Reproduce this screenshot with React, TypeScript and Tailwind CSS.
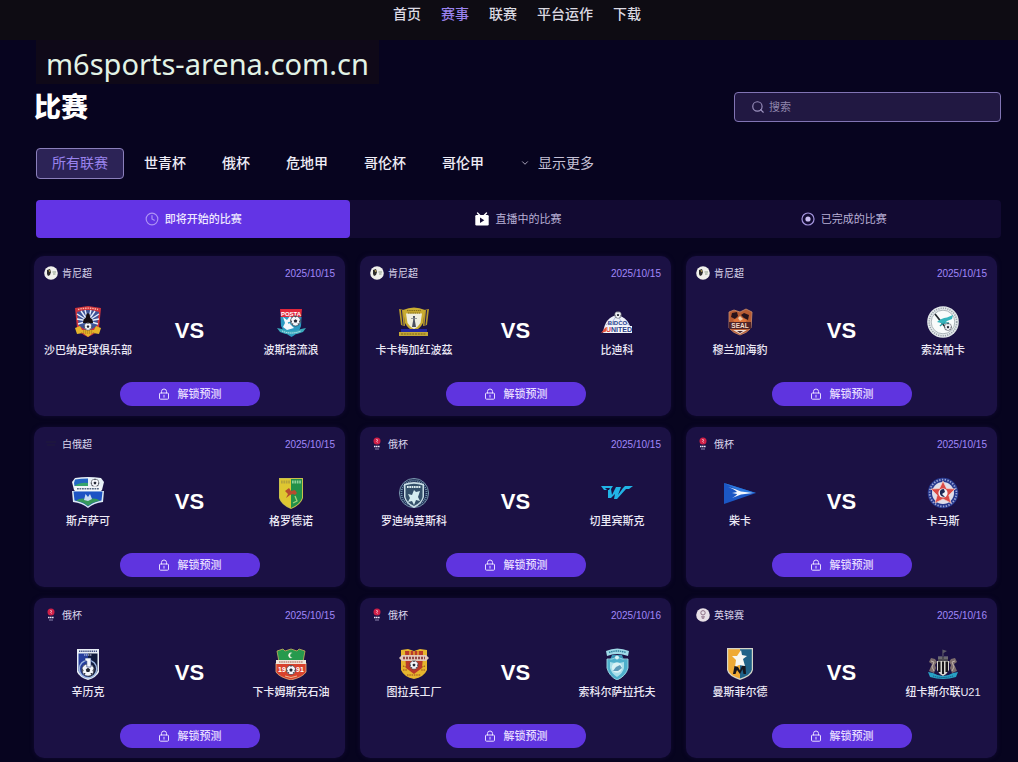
import React from "react";
import { ChevronDown, Clock, Search } from "lucide-react";

type CrestName =
  | "shabana"
  | "posta"
  | "kakamega"
  | "bidco"
  | "seal"
  | "sofapaka"
  | "slutsk"
  | "neman"
  | "rodina"
  | "wing"
  | "chayka"
  | "kamaz"
  | "shinnik"
  | "neftekhimik"
  | "arsenal"
  | "sokol"
  | "mansfield"
  | "newcastle";

type LeagueIconName = "kenya" | "belarus" | "russia" | "england";

interface Team {
  name: string;
  crest: CrestName;
}

interface Match {
  league: string;
  leagueIcon: LeagueIconName;
  date: string;
  home: Team;
  away: Team;
}

const navItems = ["首页", "赛事", "联赛", "平台运作", "下载"];

const leagues = ["世青杯", "俄杯", "危地甲", "哥伦杯", "哥伦甲"];

const matches: Match[] = [
  {
    league: "肯尼超",
    leagueIcon: "kenya",
    date: "2025/10/15",
    home: { name: "沙巴纳足球俱乐部", crest: "shabana" },
    away: { name: "波斯塔流浪", crest: "posta" },
  },
  {
    league: "肯尼超",
    leagueIcon: "kenya",
    date: "2025/10/15",
    home: { name: "卡卡梅加红波茲", crest: "kakamega" },
    away: { name: "比迪科", crest: "bidco" },
  },
  {
    league: "肯尼超",
    leagueIcon: "kenya",
    date: "2025/10/15",
    home: { name: "穆兰加海豹", crest: "seal" },
    away: { name: "索法帕卡", crest: "sofapaka" },
  },
  {
    league: "白俄超",
    leagueIcon: "belarus",
    date: "2025/10/15",
    home: { name: "斯卢萨可", crest: "slutsk" },
    away: { name: "格罗德诺", crest: "neman" },
  },
  {
    league: "俄杯",
    leagueIcon: "russia",
    date: "2025/10/15",
    home: { name: "罗迪纳莫斯科", crest: "rodina" },
    away: { name: "切里宾斯克", crest: "wing" },
  },
  {
    league: "俄杯",
    leagueIcon: "russia",
    date: "2025/10/15",
    home: { name: "柴卡", crest: "chayka" },
    away: { name: "卡马斯", crest: "kamaz" },
  },
  {
    league: "俄杯",
    leagueIcon: "russia",
    date: "2025/10/15",
    home: { name: "辛历克", crest: "shinnik" },
    away: { name: "下卡姆斯克石油", crest: "neftekhimik" },
  },
  {
    league: "俄杯",
    leagueIcon: "russia",
    date: "2025/10/16",
    home: { name: "图拉兵工厂", crest: "arsenal" },
    away: { name: "索科尔萨拉托夫", crest: "sokol" },
  },
  {
    league: "英锦赛",
    leagueIcon: "england",
    date: "2025/10/16",
    home: { name: "曼斯菲尔德", crest: "mansfield" },
    away: { name: "纽卡斯尔联U21", crest: "newcastle" },
  },
];

const Ball = ({ x, y, r }: { x: number; y: number; r: number }) => (
  <g transform={`translate(${x} ${y}) scale(${r / 5})`}>
    <circle r="5" fill="#f4f6fa" stroke="#222633" strokeWidth="0.6" />
    <path d="M0-1.8 1.8-.5 1.1 1.6H-1.1L-1.8-.5Z" fill="#222633" />
    <path
      d="M-1.5-4.7 0-3.5 1.5-4.7ZM4.8-1.2 3.6.2 4.3 2.2ZM-4.8-1.2-3.6.2-4.3 2.2ZM2.8 4 1.9 2.8 3.6 2.3ZM-2.8 4-1.9 2.8-3.6 2.3Z"
      fill="#222633"
    />
  </g>
);

const crests: Record<CrestName, React.ReactNode> = {
  shabana: (
    <>
      <path d="M3 2 16 0 29 2 27 22Q24 28 16 31 8 28 5 22Z" fill="#cf343c" />
      <path d="M5 6Q16 2 27 6L25 20Q16 27 7 20Z" fill="#3d5398" />
      <path
        d="M16 15 5 8M16 15 9 5M16 15 13 4M16 15 19 4M16 15 23 5M16 15 27 8M16 15 27 13M16 15 5 13M16 15 6 18M16 15 26 18"
        stroke="#e7eefb"
        strokeWidth="1.4"
      />
      <path d="M6 3.5Q16 .8 26 3.5" stroke="#ffb9a8" strokeWidth="1.4" strokeDasharray="1.4 1" fill="none" />
      <path d="M11 17Q11 13 13.5 12L14.5 9H17.5L18.5 12Q21 13 21 17Z" fill="#160d14" />
      <circle cx="16" cy="9" r="1.8" fill="#160d14" />
      <path d="M3 22 8 20 10 24H22L24 20 29 22 27 28 21 27 16 31 11 27 5 28Z" fill="#e5b52b" />
      <path d="M9 27H23M11 25H21" stroke="#916315" strokeWidth="0.8" strokeDasharray="1.2 0.8" />
      <Ball x={16} y={20.5} r={3.8} />
    </>
  ),
  posta: (
    <>
      <path d="M5 3H27L26 13H6Z" fill="#e2283c" />
      <path d="M5.5 11H26.5L26 20Q24 27 16.5 31 9 27 6 20Z" fill="#2c9ac2" />
      <text x="16" y="9.5" textAnchor="middle" fontSize="6" fontWeight="700" fill="#fff" fontFamily="Liberation Sans, sans-serif">
        POSTA
      </text>
      <path d="M8 11 12 14 15 10 17 13 15 18 19 22 12 24 8 21 10 17Z" fill="#f5f8fc" />
      <path d="M13 17 17 16 19 20" stroke="#34a5c7" strokeWidth="1.4" fill="none" />
      <Ball x={20.5} y={15} r={5} />
      <path d="M2 22 7 23Q16 27 26 23L31 22 28 26Q16 31 5 26Z" fill="#3ba9bd" />
      <path d="M7 25Q16 29 26 25" stroke="#d6f3f6" strokeWidth="1" strokeDasharray="1.3 0.8" fill="none" />
    </>
  ),
  kakamega: (
    <>
      <path d="M1 3 6 4 7 20 3 19ZM31 3 26 4 25 20 29 19Z" fill="#b99b2a" />
      <path d="M3.4 4 5 19M28.6 4 27 19" stroke="#262052" strokeWidth="1" />
      <path d="M5 4Q16-1 27 4L25 17Q22 23 16 25 10 23 7 17Z" fill="#c9ac31" />
      <path d="M8 7.5H24L22.5 17Q20 21 16 23 12 21 9.5 17Z" fill="#efeede" />
      <path d="M9 4.6H23M10 7H22" stroke="#766117" strokeWidth="0.9" strokeDasharray="1.5 0.7" />
      <path d="M15 10H17L16.8 14 18 21H14L15.2 14Z" fill="#4c5160" />
      <path d="M13 12.5H19" stroke="#7f858c" strokeWidth="0.8" />
      <path d="M3 23H29V26H3Z" fill="#24279e" />
      <path d="M1 26H30V30H1Z" fill="#c4a637" />
      <path d="M3 28H28" stroke="#786416" strokeWidth="1" strokeDasharray="2 0.8" />
    </>
  ),
  bidco: (
    <>
      <path d="M2 27Q4 11 16 9 28 11 31 27Z" fill="#eef1fa" />
      <path d="M16 9 12 15M16 9 20 15M5 19 10 15M28 19 23 15" stroke="#8d9ecb" strokeWidth="0.7" />
      <Ball x={17} y={9} r={3.4} />
      <text x="16.5" y="18.5" textAnchor="middle" fontSize="6" fontWeight="700" fill="#27418d" fontFamily="Liberation Sans, sans-serif">
        BIDCO
      </text>
      <path d="M0 27 4 22 7 20V25Z" fill="#e4503e" />
      <path d="M5 20H31V27H5Z" fill="#f5f7fb" />
      <text x="18" y="26" textAnchor="middle" fontSize="7" fontWeight="700" fill="#2b3f87" fontFamily="Liberation Sans, sans-serif">
        <tspan fill="#e0473a">U</tspan>NITED
      </text>
    </>
  ),
  seal: (
    <>
      <path d="M5 6 10 4 16 6 22 3 28 6 27 22Q23 27 16 29 9 27 5 22Z" fill="#b85c33" stroke="#c98d6c" strokeWidth="0.8" />
      <path d="M8 7 13 6 14 10 11 13 7 11ZM17 9 20 7 25 9 24 14 20 12Z" fill="#27121b" />
      <path d="M9 14Q16 9 23 14L21 17H11Z" fill="#e0743a" />
      <path d="M14 12 16 10 19 13 16 15Z" fill="#f0cdac" />
      <path d="M5 16H27V23H5Z" fill="#4f2428" />
      <text x="16" y="22" textAnchor="middle" fontSize="6.5" fontWeight="700" fill="#f6ddc9" fontFamily="Liberation Sans, sans-serif">
        SEAL
      </text>
      <path d="M9 24H23L16 28Z" fill="#eddfd5" />
      <path d="M13 25H19L16 27Z" fill="#43212a" />
    </>
  ),
  sofapaka: (
    <>
      <circle cx="16" cy="16" r="15.8" fill="#e5eaec" />
      <circle cx="16" cy="16" r="13.8" fill="none" stroke="#9aa3aa" strokeWidth="1.6" strokeDasharray="1.2 1.1" />
      <circle cx="16" cy="16" r="11.8" fill="#f8fbfb" stroke="#7d8b92" strokeWidth="0.6" />
      <path d="M8 8 19 22" stroke="#22272c" strokeWidth="1.7" />
      <path d="M10 16Q14 12 20 11.5L26 9 25 13 20 15 17 18 14 17Z" fill="#35b5bd" />
      <path d="M13 20Q16 16 22 17" stroke="#299ca5" strokeWidth="1.3" fill="none" />
      <Ball x={21} y={21} r={3.6} />
    </>
  ),
  slutsk: (
    <>
      <path d="M3 1Q16-1 29 1L32 5 30 13H2L0 5Z" fill="#e9f1f7" />
      <path d="M3 2.5Q9 1.5 16 1.5V9H2.5L2 6Z" fill="#2366c4" />
      <path d="M2.5 9Q8 5 16 6V9Z" fill="#36a56c" />
      <Ball x={23} y={6} r={4} />
      <path d="M0 14H32L31 25Q22 26 16 31 10 26 1 25Z" fill="#dcebf4" />
      <path d="M1.5 14.5H30.5L29.5 23.5Q21 25 16 29.5 11 25 2.5 23.5Z" fill="#1d53c4" />
      <path d="M4 23.5Q10 20 16 23 22 20 28 23.5 21 25 16 29 11 25 4 23.5Z" fill="#37995b" />
      <path d="M12 23 13.5 17 16 20 18 17 20 22 16 24Z" fill="#c8dcf3" />
      <path d="M2.5 9.5H29.5V14H2.5Z" fill="#f4f7fa" />
      <path d="M5 11.8H27" stroke="#586b86" strokeWidth="1.5" strokeDasharray="1.8 0.7" />
    </>
  ),
  neman: (
    <>
      <path d="M4 1H28V21Q26 28 16 32 6 28 4 21Z" fill="#c9c04c" />
      <path d="M5 2H16V31Q7 27 5 21Z" fill="#dfc631" />
      <path d="M16 2H27V21Q25 27 16 31Z" fill="#229149" />
      <path d="M6 5H15" stroke="#b5a23c" strokeWidth="3" strokeDasharray="1.7 0.7" />
      <path d="M17 5H26" stroke="#8ed19b" strokeWidth="3" strokeDasharray="1.7 0.7" />
      <path d="M10 14 14 11 16 14 20 13 22 16 20 18 18 17 15 18 11 21 13 17Z" fill="#b64b2e" />
      <path d="M20 19 22 24 18 26" stroke="#a4d278" strokeWidth="1.3" fill="none" />
    </>
  ),
  rodina: (
    <>
      <circle cx="16" cy="16" r="14.6" fill="#1c2950" stroke="#7f9db3" strokeWidth="0.9" />
      <circle cx="16" cy="16" r="12.5" fill="none" stroke="#7195ad" strokeWidth="1.8" strokeDasharray="1 1" />
      <path d="M6 7Q16 3 26 7V20Q24 27 16 31 8 27 6 20Z" fill="#c8dde5" />
      <path d="M7.5 8.3Q16 5 24.5 8.3V20Q23 26 16 29 9 26 7.5 20Z" fill="#34506a" />
      <path d="M9 10H23" stroke="#dcecef" strokeWidth="2" strokeDasharray="1.7 0.6" />
      <path d="M16 13 18 15 22 14 20 20 22 24 18 23 16 28 14 24 10 25 12 21 10 17 14 18Z" fill="#d5edf0" />
    </>
  ),
  wing: (
    <>
      <path
        d="M0 9H12L10 12 11 18 15 10H20L17 18 22 11 24 9H32L28 12H25L16 22H13L14 17 10 21H7L7 13H3Z"
        fill="#21b4e6"
      />
      <path d="M4 11H9L8 13H6Z" fill="#1b1245" />
    </>
  ),
  chayka: (
    <>
      <path d="M0 6 32 16 0 27Z" fill="#1b57c4" />
      <path d="M0 6 32 16H20Z" fill="#2b77dd" />
      <path d="M4 10Q12 12 17 14.5L29 16 17 17.5 8 21Q13 18 13 17L8 16 13 15Q11 12.5 4 10Z" fill="#f1f8ff" />
    </>
  ),
  kamaz: (
    <>
      <circle cx="16" cy="16" r="15.3" fill="#26388d" />
      <circle cx="16" cy="16" r="13.4" fill="none" stroke="#9aa5d4" strokeWidth="1.8" strokeDasharray="1.4 1.4" />
      <circle cx="16" cy="16" r="11" fill="#dfdeea" />
      <path d="M16 4 19.5 11.5 28 12 21.8 18.2 24 26 16 22 8 26 10.2 18.2 4 12 12.5 11.5Z" fill="#da4a45" stroke="#f6d4cc" strokeWidth="0.7" />
      <circle cx="16" cy="16" r="4.6" fill="#f3f3f6" />
      <path d="M17 12Q12 12 13 17 14 20 18 20L15 17 18 15Z" fill="#202a55" />
    </>
  ),
  shinnik: (
    <>
      <path d="M5 1H27V24Q25 29 16 32 7 29 5 24Z" fill="#e7edf5" />
      <path d="M6.5 5.5H16V30Q8 27 6.5 23Z" fill="#263e9d" />
      <path d="M16 5.5H25.5V23Q24 27 16 30Z" fill="#111a3c" />
      <path d="M7 3.2H25" stroke="#3f4d80" strokeWidth="1.4" strokeDasharray="1.4 0.7" />
      <path d="M12 7H20" stroke="#d9e3f1" strokeWidth="1.2" strokeDasharray="1.3 0.6" />
      <circle cx="16" cy="21" r="8.7" fill="none" stroke="#9cb5e0" strokeWidth="1.4" />
      <Ball x={16} y={22} r={6.2} />
      <path d="M13 10H19V19H14.8V13H13Z" fill="#f1f5fb" stroke="#233779" strokeWidth="0.6" />
    </>
  ),
  neftekhimik: (
    <>
      <path d="M2 3 8 1 10 3 16 1 22 3 24 1 30 3 28 14H4Z" fill="#269a4d" stroke="#c9b45b" strokeWidth="0.8" />
      <path d="M17.5 5A2.8 2.8 0 1 0 17.5 9.8 2.2 2.2 0 0 1 17.5 5Z" fill="#f6f7e7" />
      <path d="M1 15H31V24Q28 29 16 32 4 29 1 24Z" fill="#d8422d" stroke="#e7b07d" strokeWidth="0.8" />
      <path d="M1 12H31V16H1Z" fill="#f0e7da" />
      <path d="M4 14H28" stroke="#a55948" strokeWidth="1.2" strokeDasharray="1.6 0.6" />
      <text x="7" y="24" textAnchor="middle" fontSize="7" fontWeight="700" fill="#fff" fontFamily="Liberation Sans, sans-serif">
        19
      </text>
      <text x="25" y="24" textAnchor="middle" fontSize="7" fontWeight="700" fill="#fff" fontFamily="Liberation Sans, sans-serif">
        91
      </text>
      <Ball x={16} y={22} r={4.6} />
      <path d="M10 28Q16 31 22 28" stroke="#efc89b" strokeWidth="0.9" fill="none" />
    </>
  ),
  arsenal: (
    <>
      <path d="M3 2 10 1 16 3 22 1 29 2 29 22Q26 29 16 31 6 29 3 22Z" fill="#e6b52e" />
      <path d="M7 3H25V9L24 20 16 26 8 20Z" fill="#b93a2a" />
      <path d="M12 3V8M16 3V8M20 3V8" stroke="#edbf34" strokeWidth="1.2" />
      <path d="M1 10 4 7H28L31 10 28 13H4Z" fill="#e0c8bc" />
      <path d="M5 10H27" stroke="#8f4848" strokeWidth="2.6" strokeDasharray="2 1" />
      <path d="M5 18 8 19M5 22 9 22M27 18 24 19M27 22 23 22M9 27H23" stroke="#9b4c1c" strokeWidth="1.2" strokeDasharray="1.5 0.8" />
      <Ball x={16} y={17} r={4.2} />
    </>
  ),
  sokol: (
    <>
      <path d="M5 3Q16-2 28 3L27 8Q16 4 6 8Z" fill="#9fd9e7" />
      <path d="M8 4.5Q16 1.5 25 4.5" stroke="#317f9c" strokeWidth="1.4" strokeDasharray="1.5 0.7" fill="none" />
      <path d="M11 7H21L23 12H9Z" fill="#3b93b5" />
      <path d="M6 11Q11 12 16 9 21 12 27 11V20Q25 28 16 32 8 28 6 20Z" fill="#4eafcb" stroke="#a3dbe8" strokeWidth="0.9" />
      <path d="M9 14Q16 16 23 14V20Q22 25 16 29 10 25 9 20Z" fill="#a9dfea" />
      <circle cx="16" cy="19.5" r="5.2" fill="#d9f2f5" />
      <path d="M12 23 15 19 19 17 21 20 17 23Z" fill="#5f9cba" />
      <circle cx="16" cy="9.5" r="2" fill="#d9f2f5" />
    </>
  ),
  mansfield: (
    <>
      <path d="M3 0H29V22Q28 28 16 32 4 28 3 22Z" fill="#d5d5c8" />
      <path d="M4.2 1.2H16V30.5Q5 27 4.2 21.5Z" fill="#efaa35" />
      <path d="M16 1.2H27.8V21.5Q27 27 16 30.5Z" fill="#1f6288" />
      <path d="M17 2 18 7 23 8 19 11 21 18 15 17 11 19 12 12 8 8 13 8Z" fill="#f7f7f2" />
      <path d="M9 26 10.5 18 14 19 16 22.5 18 18H21.5L22 26H19.5L18.5 21 16 26 13 22 11.5 26Z" fill="#15151d" />
    </>
  ),
  newcastle: (
    <>
      <path d="M15.4 9V1.5L20 3 16.5 5V9Z" fill="#5d5b68" />
      <path d="M11 9H21V14H11Z" fill="#4c4a51" />
      <path d="M12 8V11M14 8V11M18 8V11M20 8V11" stroke="#8b8990" strokeWidth="1" />
      <path d="M10 13H22V22Q20 26 16 28 12 26 10 22Z" fill="#d9d6d0" />
      <path d="M11 13.5H13.5V24H11ZM15 13.5H17V26H15ZM18.5 13.5H21V24H18.5Z" fill="#19161b" />
      <path d="M8 11 4 10 2 14 5 16 2 23 7 25 9 20 8 17 10 14Z" fill="#7d6d6d" />
      <path d="M24 11 28 10 30 14 27 16 30 23 25 25 23 20 24 17 22 14Z" fill="#7d6d6d" />
      <path d="M4 13 7 14 5 19 7 23M28 13 25 14 27 19 25 23" stroke="#c5b8b0" strokeWidth="0.9" fill="none" />
      <path d="M1 24 6 25Q16 31 26 25L31 24 29 29Q16 33 3 29Z" fill="#28a0c4" />
      <path d="M6 28Q16 31 26 28" stroke="#15557a" strokeWidth="1" strokeDasharray="1.3 0.8" fill="none" />
    </>
  ),
};

const leagueIcons: Record<LeagueIconName, React.ReactNode> = {
  kenya: (
    <>
      <circle cx="7" cy="7" r="6.8" fill="#f0f0ec" />
      <path d="M3 4 6 3 7 6 6 9 4 10 3 8Z" fill="#2c2b2b" />
      <path d="M5 4 6 6" stroke="#d7bc62" strokeWidth="0.9" />
      <path d="M8.5 6H12M9 8H11.5" stroke="#8d9d88" strokeWidth="1" />
    </>
  ),
  belarus: <path d="M2 5H12M3 8H11" stroke="#1d153f" strokeWidth="2" />,
  russia: (
    <>
      <circle cx="7" cy="4" r="3.5" fill="#cf2048" />
      <path d="M6 2.5 8 3 6.5 4.5 8 5.5" stroke="#f2a7b5" strokeWidth="0.9" fill="none" />
      <path d="M4 9.5H10" stroke="#e8e3f3" strokeWidth="1.3" strokeDasharray="1.5 0.4" />
      <path d="M5 12H9" stroke="#9b92bd" strokeWidth="0.9" />
    </>
  ),
  england: (
    <>
      <circle cx="7" cy="7" r="6.8" fill="#e8e0e7" />
      <circle cx="7" cy="4.8" r="2.2" fill="none" stroke="#8d6f86" strokeWidth="1" />
      <path d="M5 8H9L8 11H6Z" fill="#a890a3" />
    </>
  ),
};

const LockIcon = () => (
  <svg viewBox="0 0 12 12" className="h-3 w-3 shrink-0" fill="none" stroke="currentColor" strokeWidth={1}>
    <rect x="1.5" y="5" width="9" height="6.2" rx="1" />
    <path d="M3.5 5V3.5a2.5 2.5 0 0 1 5 0V5M6 7.2V9.2" strokeLinecap="round" />
  </svg>
);

const LiveIcon = () => (
  <svg viewBox="0 0 14 14" className="h-3.5 w-3.5 shrink-0">
    <path d="M2.5 1 5 3.5M11.5 1 9 3.5" stroke="#fff" strokeWidth="1.4" strokeLinecap="round" />
    <rect x="0.3" y="3" width="13.4" height="10.4" rx="1.2" fill="#fff" />
    <path d="M5 5.5 9.3 8.2 5 11Z" fill="#150d35" />
  </svg>
);

const FinishedIcon = () => (
  <svg viewBox="0 0 14 14" className="h-3.5 w-3.5 shrink-0">
    <circle cx="7" cy="7" r="6" fill="none" stroke="#a394dc" strokeWidth="1.2" />
    <circle cx="7" cy="7" r="2.6" fill="#cbbff2" />
  </svg>
);

const TeamBadge: React.FC<Team> = ({ name, crest }) => (
  <div className="flex w-[88px] flex-col items-center gap-1">
    <svg viewBox="0 0 32 32" className="h-8 w-8" aria-hidden="true">
      {crests[crest]}
    </svg>
    <span className="text-[11px] leading-4 font-medium whitespace-nowrap text-[#ece9f6]">
      {name}
    </span>
  </div>
);

const MatchCard: React.FC<Match> = ({ league, leagueIcon, date, home, away }) => (
  <article className="rounded-[10px] bg-[#1b1144] p-2.5 shadow-[0_0_4px_#130b35]">
    <div className="flex h-3.5 items-center justify-between text-[10px]">
      <div className="flex items-center gap-1 text-[#dcd7ec]">
        <svg viewBox="0 0 14 14" className="h-3.5 w-3.5" aria-hidden="true">
          {leagueIcons[leagueIcon]}
        </svg>
        <span>{league}</span>
      </div>
      <time className="text-[#a088fa]">{date}</time>
    </div>

    <div className="mt-[26px] flex items-center justify-between">
      <TeamBadge {...home} />
      <span className="pb-0.5 text-[22px] leading-7 font-bold text-white">VS</span>
      <TeamBadge {...away} />
    </div>

    <button
      type="button"
      className="mx-auto mt-6 flex h-6 w-[140px] items-center justify-center gap-2 rounded-full bg-[#5f34df] text-[11px] font-medium text-[#e6dcff]"
    >
      <LockIcon />
      解锁预测
    </button>
  </article>
);

const App = () => {
  return (
    <div className="relative min-h-screen bg-[#07041f] font-['Liberation_Sans','Noto_Sans_CJK_SC',sans-serif] text-white">
      {/* Top navigation */}
      <header className="h-10 bg-[#0e0c13] pl-4">
        <nav className="flex justify-center gap-5 pt-1 text-sm font-medium text-[#dcdae2]">
          {navItems.map((item) => (
            <a
              key={item}
              href="#"
              className={item === "赛事" ? "text-[#9a82ee]" : undefined}
            >
              {item}
            </a>
          ))}
        </nav>
      </header>

      {/* Domain label floating over the page */}
      <div className="absolute top-10 left-9 h-11 bg-[#0f0918] px-2.5 font-['Noto_Sans',sans-serif] text-[29px] leading-[48px] text-[#e2f3e6]">
        m6sports-arena.com.cn
      </div>

      <main className="pt-[52px] pr-[17px] pb-1 pl-[34px]">
        <div className="flex h-[30px] items-start justify-between">
          <h1 className="text-[27px] leading-8 font-black">比赛</h1>
          <label className="flex h-[30px] w-[267px] items-center gap-1 rounded border border-[#8174b4] bg-[#211842] pl-4 text-[#9a90bd]">
            <Search className="h-3.5 w-3.5 shrink-0" aria-hidden="true" />
            <input
              type="search"
              aria-label="搜索"
              placeholder="搜索"
              className="min-w-0 flex-1 bg-transparent text-[11px] outline-none placeholder:text-[#8e85ac]"
            />
          </label>
        </div>

        {/* League filter */}
        <div className="mt-[26px] ml-0.5 flex items-center text-sm font-medium text-[#eeecf6]">
          <button
            type="button"
            className="mr-0.5 h-[31px] rounded border border-[#8b80bb] bg-[#2c2356] px-[15px] pb-0.5 font-normal text-[#9a83ee]"
          >
            所有联赛
          </button>
          {leagues.map((league) => (
            <button key={league} type="button" className="h-[31px] px-[18px] pb-0.5">
              {league}
            </button>
          ))}
          <button
            type="button"
            className="ml-[18px] flex h-[31px] items-center gap-2 pb-0.5 font-normal text-[#c6c1d6]"
          >
            <ChevronDown className="h-2.5 w-2.5" aria-hidden="true" />
            显示更多
          </button>
        </div>

        {/* Match status tabs */}
        <div className="mt-[21px] ml-0.5 grid grid-cols-3 gap-[11px] rounded bg-[#120a32] text-[11px] text-[#b9b0d6]">
          <button
            type="button"
            className="flex h-[38px] items-center justify-center gap-1.5 rounded bg-[#6334e5] font-medium text-[#eee8ff]"
          >
            <Clock className="h-3.5 w-3.5 text-[#ad92f5]" aria-hidden="true" />
            即将开始的比赛
          </button>
          <button type="button" className="flex h-[38px] items-center justify-center gap-1.5">
            <LiveIcon />
            直播中的比赛
          </button>
          <button type="button" className="flex h-[38px] items-center justify-center gap-1.5">
            <FinishedIcon />
            已完成的比赛
          </button>
        </div>

        <div className="mt-[18px] mr-1 grid grid-cols-3 gap-x-[15px] gap-y-[11px]">
          {matches.map((match) => (
            <MatchCard key={match.home.crest} {...match} />
          ))}
        </div>
      </main>
    </div>
  );
};

export default App;
